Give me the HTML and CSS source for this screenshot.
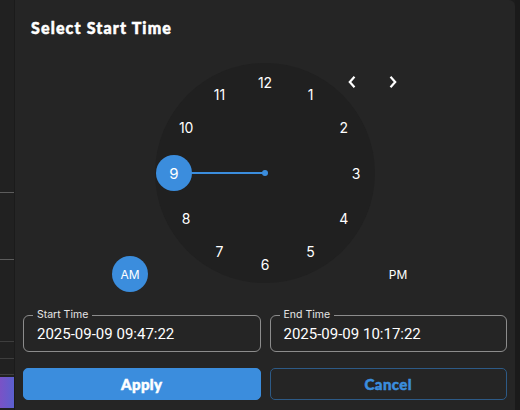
FILE: index.html
```html
<!DOCTYPE html>
<html lang="en">
<head>
<meta charset="utf-8">
<title>Select Start Time</title>
<link rel="stylesheet" href="styles.css">
</head>
<body>
<div class="page">
  <div class="backdrop">
    <div class="bd-line l1"></div>
    <div class="bd-line l2"></div>
    <div class="bd-line l3"></div>
    <div class="bd-line l4"></div>
    <div class="bd-line l5"></div>
    <div class="bd-chart"></div>
  </div>
  <div class="dialog">
    <h2 class="title">Select Start Time</h2>
    <div class="clock-area">
      <div class="clock">
        <div class="hand"></div>
        <div class="pin"></div>
        <span class="num n12">12</span>
        <span class="num n1">1</span>
        <span class="num n2">2</span>
        <span class="num n3">3</span>
        <span class="num n4">4</span>
        <span class="num n5">5</span>
        <span class="num n6">6</span>
        <span class="num n7">7</span>
        <span class="num n8">8</span>
        <span class="num n9 selected">9</span>
        <span class="num n10">10</span>
        <span class="num n11">11</span>
      </div>
      <div class="arrows">
        <button class="arrow" aria-label="previous">
          <svg width="14" height="14" viewBox="0 0 14 14"><path d="M9.5 1.8 L4.8 7 L9.5 12.2" fill="none" stroke="#fff" stroke-width="2.2"/></svg>
        </button>
        <button class="arrow" aria-label="next">
          <svg width="14" height="14" viewBox="0 0 14 14"><path d="M4.5 1.8 L9.2 7 L4.5 12.2" fill="none" stroke="#fff" stroke-width="2.2"/></svg>
        </button>
      </div>
      <button class="ampm am active">AM</button>
      <button class="ampm pm">PM</button>
    </div>
    <div class="fields">
      <div class="field">
        <span class="field-label">Start Time</span>
        <span class="field-value">2025-09-09 09:47:22</span>
      </div>
      <div class="field">
        <span class="field-label">End Time</span>
        <span class="field-value">2025-09-09 10:17:22</span>
      </div>
    </div>
    <div class="actions">
      <button class="btn btn-apply">Apply</button>
      <button class="btn btn-cancel">Cancel</button>
    </div>
  </div>
  <div class="edge"></div>
</div>
</body>
</html>
```
FILE: styles.css
```css
* { box-sizing: border-box; }
html, body { margin: 0; padding: 0; }
body {
  width: 520px;
  height: 410px;
  overflow: hidden;
  background: #1c1c1c;
  font-family: "Inter", "Noto Sans", sans-serif;
  color: #fff;
}
.page {
  display: flex;
  width: 520px;
  height: 410px;
}
.backdrop {
  position: relative;
  width: 15px;
  height: 410px;
  background: #212121;
  border-right: 1px solid #1b1b1b;
}
.bd-line {
  position: absolute;
  left: 0;
  width: 14px;
  height: 1px;
  background: #5c5c5c;
}
.l1 { top: 192px; }
.l2 { top: 259px; }
.l3 { top: 341px; background: #3e3e3e; }
.l4 { top: 358px; background: #3e3e3e; }
.l5 { top: 374px; background: #3e3e3e; }
.bd-chart {
  position: absolute;
  left: 0;
  top: 377px;
  width: 14px;
  height: 31px;
  background: linear-gradient(90deg, #7a52c6, #5b60cf);
}
.dialog {
  width: 500px;
  height: 410px;
  background: #252525;
  border-top-right-radius: 6px;
  display: flex;
  flex-direction: column;
}
.edge {
  width: 5px;
  height: 410px;
  background: #1a1a1a;
}
.title {
  margin: 0;
  padding: 18px 16px 0;
  font-family: "Lato", sans-serif;
  font-weight: 900;
  font-size: 16px;
  line-height: 20px;
  letter-spacing: 1.15px;
  -webkit-text-stroke: 0.5px #fff;
  color: #fff;
}
.clock-area {
  position: relative;
  margin-top: 25px;
  height: 220px;
  display: flex;
  justify-content: center;
}
.clock {
  position: relative;
  width: 220px;
  height: 220px;
  border-radius: 50%;
  background: #202020;
}
.num {
  position: absolute;
  width: 36px;
  height: 36px;
  display: flex;
  align-items: center;
  justify-content: center;
  font-size: 14px;
  color: #fff;
  border-radius: 50%;
}
.n12 { left: 92px; top: 1px; }
.n1 { left: 137.5px; top: 13.2px; }
.n2 { left: 170.8px; top: 46.5px; }
.n3 { left: 183px; top: 92px; }
.n4 { left: 170.8px; top: 137.5px; }
.n5 { left: 137.5px; top: 170.8px; }
.n6 { left: 92px; top: 183px; }
.n7 { left: 46.5px; top: 170.8px; }
.n8 { left: 13.2px; top: 137.5px; }
.n9 { left: 1px; top: 92px; }
.n10 { left: 13.2px; top: 46.5px; }
.n11 { left: 46.5px; top: 13.2px; }
.num.selected {
  background: #3b8ddd;
  font-size: 15px;
}
.hand {
  position: absolute;
  left: 19px;
  top: 109px;
  width: 91px;
  height: 2px;
  background: #3b8ddd;
}
.pin {
  position: absolute;
  left: 107px;
  top: 107px;
  width: 6px;
  height: 6px;
  border-radius: 50%;
  background: #3b8ddd;
}
.arrows {
  position: absolute;
  left: 325px;
  top: 7px;
  display: flex;
  gap: 17px;
}
.arrow {
  width: 24px;
  height: 24px;
  padding: 0;
  border: 0;
  background: transparent;
  display: flex;
  align-items: center;
  justify-content: center;
}
.ampm {
  position: absolute;
  top: 193px;
  width: 36px;
  height: 36px;
  padding: 0;
  border: 0;
  border-radius: 50%;
  background: transparent;
  color: #fff;
  font-family: "Inter", sans-serif;
  font-size: 12px;
  font-weight: 400;
}
.am { left: 97px; }
.pm { left: 365px; }
.ampm.active { background: #3b8ddd; }
.fields {
  display: flex;
  gap: 9px;
  padding: 0 8px;
  margin-top: 32px;
}
.field {
  position: relative;
  flex: 1;
  height: 37px;
  border: 1px solid #8c8c8c;
  border-radius: 6px;
  display: flex;
  align-items: center;
  padding: 0 13px;
}
.field-label {
  position: absolute;
  left: 9px;
  top: -8px;
  padding: 0 4px;
  background: #252525;
  font-size: 10.5px;
  line-height: 13px;
  color: #e6e6e6;
}
.field-value {
  font-family: "Roboto", sans-serif;
  font-size: 15px;
  color: #fff;
  padding-top: 1px;
}
.actions {
  display: flex;
  gap: 9px;
  padding: 0 8px;
  margin-top: 16px;
}
.btn {
  flex: 1;
  height: 32px;
  border-radius: 5px;
  font-family: "Lato", sans-serif;
  font-weight: 900;
  font-size: 15px;
  letter-spacing: 0.4px;
  padding: 0;
}
.btn-apply {
  background: #3b8ddd;
  border: 1px solid #3b8ddd;
  color: #fff;
  -webkit-text-stroke: 0.5px #fff;
}
.btn-cancel {
  background: transparent;
  border: 1px solid #2d5a86;
  color: #3b8ddd;
  -webkit-text-stroke: 0.5px #3b8ddd;
}
```
